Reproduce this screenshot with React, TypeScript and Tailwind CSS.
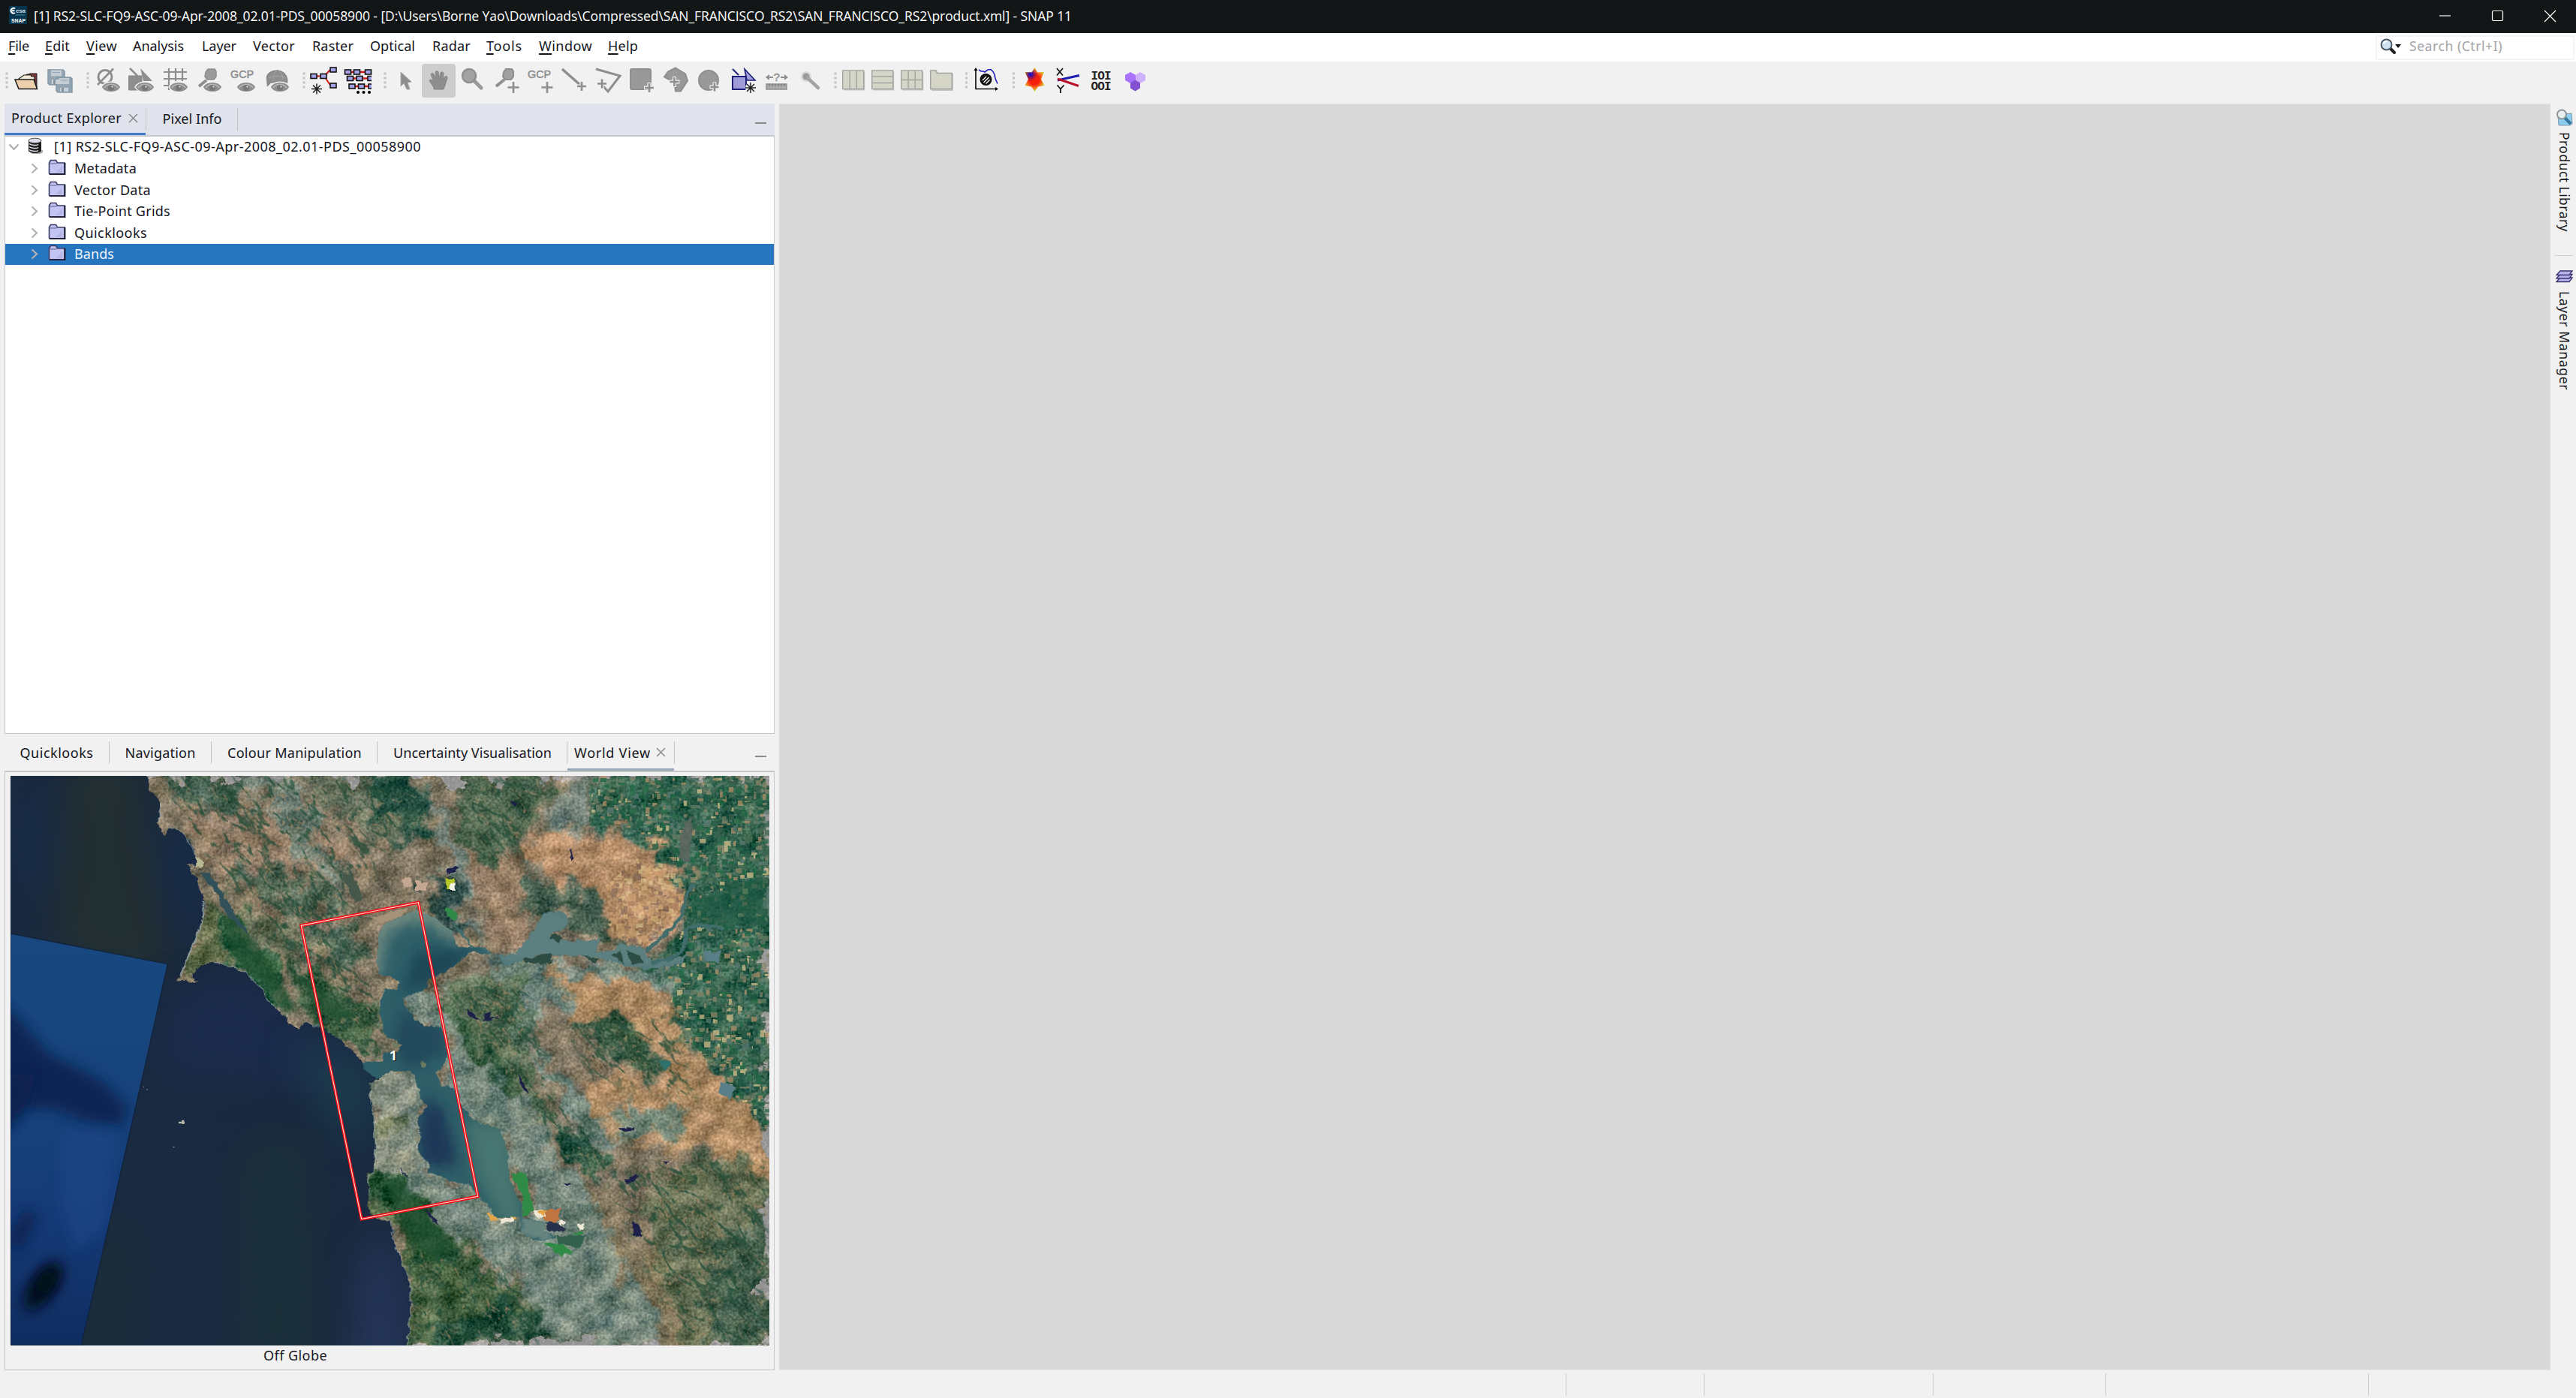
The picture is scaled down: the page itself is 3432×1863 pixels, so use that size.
import { useLayoutEffect, useRef, useState, type ReactNode } from "react";

const UI = "font-['Noto_Sans','Open_Sans',sans-serif]";

/* Text that is tracked so that it fills exactly `w` pixels along its direction. */
function Fit({ w, children, vertical = false, className = "" }: { w: number; children: string; vertical?: boolean; className?: string }) {
  const ref = useRef<HTMLSpanElement>(null);
  const [track, setTrack] = useState(0);
  useLayoutEffect(() => {
    const box = ref.current!.getBoundingClientRect();
    const natural = vertical ? box.height : box.width;
    setTrack((w - natural) / children.length);
  }, []);
  return (
    <span ref={ref} className={`inline-block shrink-0 whitespace-pre ${className}`} style={{ letterSpacing: track }}>
      {children}
    </span>
  );
}

function TitleBar() {
  return (
    <header className="flex h-11 shrink-0 items-center bg-[#121617] text-white">
      <svg className="-mt-[4px] ml-3 shrink-0" width="24" height="24" viewBox="0 0 24 24">
        <rect width="24" height="24" fill="#06364f" />
        <path d="M8 3.5A3.4 3.4 0 1 0 8 9M4 6.2h3.5" fill="none" stroke="#fff" strokeWidth="2" />
        <text x="9" y="9" fontSize="8" fontWeight="bold" fill="#c8dbe4" fontFamily="Liberation Sans" textLength="13">esa</text>
        <path d="M9 12h12" stroke="#4f8793" strokeWidth="2" opacity=".5" />
        <text x="3" y="22" fontSize="8" fontWeight="bold" fill="#fff" fontFamily="Liberation Sans" textLength="19" lengthAdjust="spacingAndGlyphs">SNAP</text>
      </svg>
      <div className="-mt-[3px] ml-[9px] font-['Open_Sans',sans-serif] text-[17.5px]">
        <Fit w={1383}>{"[1] RS2-SLC-FQ9-ASC-09-Apr-2008_02.01-PDS_00058900 - [D:\\Users\\Borne Yao\\Downloads\\Compressed\\SAN_FRANCISCO_RS2\\SAN_FRANCISCO_RS2\\product.xml] - SNAP 11"}</Fit>
      </div>
      <div className="-mt-[2px] ml-auto mr-[26px] flex items-center gap-[53px]">
        <svg width="17" height="17" viewBox="0 0 17 17"><path d="M1 8h15" stroke="#fff" strokeWidth="1.2" /></svg>
        <svg width="17" height="17" viewBox="0 0 17 17"><rect x="1.5" y="1.5" width="14" height="13" rx="1.5" fill="none" stroke="#fff" strokeWidth="1.2" /></svg>
        <svg width="17" height="17" viewBox="0 0 17 17"><path d="M1 1l15 15M16 1L1 16" stroke="#fff" strokeWidth="1.2" /></svg>
      </div>
    </header>
  );
}

/* label, text width, distance to the next item, has a mnemonic underline */
const MENUS: [string, number, number, boolean][] = [
  ["File", 28, 21, true], ["Edit", 33, 22, true], ["View", 41, 21, true], ["Analysis", 68, 24, false],
  ["Layer", 46, 22, false], ["Vector", 56, 23, false], ["Raster", 55, 22, false], ["Optical", 60, 23, false],
  ["Radar", 51, 21, false], ["Tools", 48, 22, true], ["Window", 71, 21, true], ["Help", 40, 0, true],
];

function MenuBar() {
  return (
    <nav className="flex h-[38px] shrink-0 items-center bg-white pl-[11px] text-[18px] text-[#16161e]">
      {MENUS.map(([label, w, gap, mn]) => (
        <div key={label} className="-mt-[5px] shrink-0" style={{ width: w + gap }}>
          <Fit w={w} className={mn ? "first-letter:underline first-letter:decoration-[1.5px] first-letter:underline-offset-[3px]" : ""}>{label}</Fit>
        </div>
      ))}
      <div className="ml-auto mr-[2px] flex h-[33px] w-[265px] items-center border-2 border-[#f4f4f4] bg-white">
        <svg className="-mt-[2px] ml-[3px] shrink-0" width="30" height="24" viewBox="0 0 30 24">
          <path d="M14 14l6 6" stroke="#222" strokeWidth="4" strokeLinecap="round" />
          <circle cx="9.5" cy="9.5" r="7" fill="#cfe3f3" stroke="#4d5a66" strokeWidth="2" />
          <path d="M5.5 8a5 5 0 0 1 5-3" stroke="#fff" strokeWidth="2" fill="none" />
          <path d="M21 9h8l-4 5z" fill="#111" />
        </svg>
        <div className="-mt-[5px] ml-[10px] text-[17.5px] text-[#a3a3a8]"><Fit w={124}>Search (Ctrl+I)</Fit></div>
      </div>
    </nav>
  );
}

const G = "#8e8e8e";

/* A toolbar slot that spans x0..x1; its drawing uses toolbar coordinates. */
function Slot({ x0, x1, children }: { x0: number; x1: number; children?: ReactNode }) {
  return (
    <svg className="block shrink-0" width={x1 - x0} height="56" viewBox={`${x0} 82 ${x1 - x0} 56`}>{children}</svg>
  );
}

const Eye = ({ x, y }: { x: number; y: number }) => (
  <g transform={`translate(${x} ${y})`}>
    <path d="M-13 0C-8-9 8-9 13 0C8 9-8 9-13 0Z" fill={G} stroke="#f1f1f1" strokeWidth="1.5" />
    <path d="M-9 1C-5-5 5-5 9 1" fill="none" stroke="#b9b9b9" strokeWidth="1.6" />
    <circle r="4" cy="1" fill="#777" /><circle r="1.2" cx="1.5" cy="-.5" fill="#ccc" />
  </g>
);
const Plus = ({ x, y, s = 6.5, halo = false }: { x: number; y: number; s?: number; halo?: boolean }) => (
  <g>
    {halo && <path d={`M${x - s - 1} ${y}h${2 * s + 2}M${x} ${y - s - 1}v${2 * s + 2}`} stroke="#f1f1f1" strokeWidth="5" />}
    <path d={`M${x - s} ${y}h${2 * s}M${x} ${y - s}v${2 * s}`} stroke={G} strokeWidth="2.6" />
  </g>
);
const Burst = ({ x, y }: { x: number; y: number }) => (
  <path transform={`translate(${x} ${y})`} d="M0-7V7M-7 0H7M-5-5L5 5M5-5L-5 5" stroke="#222" strokeWidth="1.5" />
);
const Grip = ({ x }: { x: number }) => (
  <g fill="#c2c2c2">{[98, 104, 110, 116].map((y) => <rect key={y} x={x - 1.5} y={y - 1.5} width="3" height="3" />)}</g>
);
const Node = ({ x, y }: { x: number; y: number }) => <rect x={x - 4} y={y - 3} width="8" height="6" fill="#a3a3e8" stroke="#111" strokeWidth="1.6" />;
const Gcp = ({ x }: { x: number }) => (
  <text x={x} y="103.5" fontSize="14" fill={G} stroke={G} strokeWidth=".5" fontFamily="Liberation Sans" textLength="31" lengthAdjust="spacingAndGlyphs">GCP</text>
);
const Tile = ({ x, d }: { x: number; d: string }) => (
  <g>
    <rect x={x + 1.5} y="95.5" width="28" height="25" fill="#c4c4c4" />
    <rect x={x} y="94" width="28" height="24.5" fill="#d5d5c8" stroke="#a3a3a0" strokeWidth="1.4" />
    <path transform={`translate(${x} 94)`} d={d} stroke="#a3a3a0" strokeWidth="1.4" />
  </g>
);

function ToolBar() {
  return (
    <div className="flex h-[56px] shrink-0 bg-[#f1f1f1]">
      <Slot x0={0} x1={15}><Grip x={9} /></Slot>
      <Slot x0={15} x1={56}>
        <path d="M28 104l8-5h2l2-1h9v20l-2 1" fill="#7d3438" stroke="#222" />
        <path d="M25 105l7-5h9l1 2h4v14H26z" fill="#f3ead8" stroke="#222" strokeWidth="1.2" />
        <path d="M20 106h25l4.5 12.5H25z" fill="#ecd0ae" stroke="#1b1b1b" strokeWidth="1.5" />
      </Slot>
      <Slot x0={56} x1={106}>
        <g fill="#93a5b3" stroke="#8496a4" strokeWidth="1.5">
          <path d="M64 93h20l2 2v18H66l-2-2z" /><path d="M75 103h19l2 2v18H77l-2-2z" />
        </g>
        <path d="M68 93.500h14v8H68zM79 104h13v8H79z" fill="#c3ccd3" /><path d="M69 106h11v6H69zM80 117h11v5H80z" fill="#c9d1d6" />
        <path d="M71 106h3v6h-3zM82 117h3v5h-3z" fill="#8496a4" /><path d="M70 96.500h10M81 107h9" stroke="#93a5b3" />
      </Slot>
      <Slot x0={106} x1={125}><Grip x={117} /></Slot>
      <Slot x0={125} x1={166}>
        <circle cx="140" cy="102.500" r="9" fill="none" stroke={G} strokeWidth="3" /><path d="M130 113L151 91.500" stroke={G} strokeWidth="2.600" />
        <Eye x={148} y={116} />
      </Slot>
      <Slot x0={166} x1={212}>
        <path d="M173 91l10 10" stroke={G} strokeWidth="2.500" /><path d="M187 91l16 17h-12z" fill={G} /><path d="M171.500 101H189v19h-17.500z" fill={G} stroke="#858585" />
        <Eye x={193} y={116} />
      </Slot>
      <Slot x0={212} x1={257}>
        <path d="M218 96h31M218 105h31M218 114h14M225 91v29M234 91v17M243 91v17" stroke={G} strokeWidth="2.200" /><Eye x={238} y={116} />
      </Slot>
      <Slot x0={257} x1={302}>
        <path d="M265 115l10-8" stroke={G} strokeWidth="4" /><path d="M277 92h9l2 3v7l-3 4h-9l-3-4 1-6z" fill="#9a9a9a" stroke={G} strokeWidth="1.500" /><Eye x={283} y={116} />
      </Slot>
      <Slot x0={302} x1={348}><Gcp x={307} /><Eye x={328} y={116} /></Slot>
      <Slot x0={348} x1={394}>
        <path d="M355.500 103c1-6 8-9 14-9 5 0 11 3 13 11v5h-22l-4 4z" fill={G} stroke="#858585" strokeWidth="1.500" />
        <path d="M358 104c6-3 14-3 22-1M368 94c-3 3-4 9-4 15M372 94c3 4 5 8 5 12" stroke="#a5a5a5" fill="none" /><Eye x={373} y={116} />
      </Slot>
      <Slot x0={394} x1={411}><Grip x={405} /></Slot>
      <Slot x0={411} x1={454}>
        <path d="M418 101.500h14L440 93M432 101.500l8 12" stroke="#d21c1c" strokeWidth="2" fill="none" />
        <Node x={418} y={101.500} /><Node x={431} y={101.500} /><Node x={444} y={93} /><Node x={444} y={114} /><Burst x={422} y={118.500} />
      </Slot>
      <Slot x0={454} x1={503}>
        <path d="M462 96h32M465 104.500h30M468 115h27" stroke="#d21c1c" strokeWidth="2.500" />
        <Node x={463.500} y={96} /><Node x={475.500} y={96} /><Node x={490.500} y={96} /><Node x={466.500} y={104.500} /><Node x={479} y={104.500} />
        <path d="M495 101.500h-5v6h5M495 112h-4v6h4" fill="#a3a3e8" stroke="#111" strokeWidth="1.600" /><Node x={469} y={115} /><Node x={481.500} y={115} />
        <circle cx="477" cy="123" r="2" /><circle cx="484.500" cy="123" r="2" /><circle cx="492" cy="123" r="2" />
      </Slot>
      <Slot x0={503} x1={524}><Grip x={513} /></Slot>
      <Slot x0={524} x1={562}><path d="M534 96v19l4-4 4 8h4l-3-9 5-1z" fill={G} stroke="#a8a8a8" /></Slot>
      <div className="mt-[2.500px] flex h-[45px] w-[45px] shrink-0 rounded bg-[#cdcdcd]">
        <svg width="45" height="47" viewBox="0 0 45 47">
          <path d="M16 34c0-5-5-8-6-12 2-2 4 0 6 2l-4-10c1-2 3-2 4 0l3 6-1-9c1-2 3-2 4 0l1 9 2-8c1-2 4-1 4 1l-1 9 3-5c2-1 3 0 3 2-2 6-3 10-5 15z" fill={G} stroke="#858585" />
        </svg>
      </div>
      <Slot x0={607} x1={652}>
        <path d="M632 115l9 9" stroke="#9a9a9a" strokeWidth="5" strokeLinecap="round" transform="translate(0 -7)" />
        <circle cx="625" cy="101" r="9" fill="#a3a3a3" stroke={G} strokeWidth="2.500" />
      </Slot>
      <Slot x0={652} x1={699}>
        <path d="M661 115l11-9" stroke={G} strokeWidth="4" /><path d="M674 92h8l2 3v7l-3 4h-8l-3-4 1-6z" fill="#a0a0a0" stroke={G} strokeWidth="2" /><Plus x={684} y={116.500} s={7.500} />
      </Slot>
      <Slot x0={699} x1={742}><Gcp x={703} /><Plus x={729} y={116.500} s={7.500} /></Slot>
      <Slot x0={742} x1={788}><path d="M749 92l26 23" stroke={G} strokeWidth="3.500" /><Plus x={775} y={115} s={6} halo /></Slot>
      <Slot x0={788} x1={833}><path d="M794 92l32 9-16 21-7-8" fill="none" stroke={G} strokeWidth="3" /><Plus x={802} y={111.500} s={6} halo /></Slot>
      <Slot x0={833} x1={879}><rect x="840" y="92" width="27" height="27" rx="2" fill="#999" stroke={G} strokeWidth="2" /><Plus x={865} y={117} s={6} halo /></Slot>
      <Slot x0={879} x1={923}><path d="M900 90.500l13 8 3 9-9 14h-7l-1-9-3-4-11-6 5-7z" fill="#999" stroke={G} strokeWidth="2" /><Plus x={898.500} y={109} s={6} halo /></Slot>
      <Slot x0={923} x1={968}><circle cx="944" cy="107" r="13" fill="#999" stroke={G} strokeWidth="2" /><Plus x={952} y={116} s={5.500} halo /></Slot>
      <Slot x0={968} x1={1014}>
        <path d="M976 92l8 8" stroke="#1d1d7a" strokeWidth="2" /><path d="M992 92l14 15h-11z" fill="#a3a0dc" stroke="#1d1d7a" strokeWidth="1.600" />
        <rect x="976" y="102" width="18" height="17" fill="#a09cd8" stroke="#1d1d7a" strokeWidth="2" /><circle cx="1000" cy="117" r="7" fill="#f1f1f1" /><Burst x={1000} y={117} />
      </Slot>
      <Slot x0={1014} x1={1056}>
        <path d="M1022 103h8M1040 103h8" stroke={G} strokeWidth="1.800" /><path d="M1020 103l5-4v8zM1050 103l-5-4v8z" fill={G} />
        <text x="1030.500" y="108" fontSize="15" fill={G} stroke={G} strokeWidth=".4" fontFamily="Liberation Sans">?</text>
        <rect x="1021" y="112" width="27" height="7" fill="#aaa" stroke={G} strokeWidth="1.500" /><path d="M1025 112v3M1029 112v3M1033 112v3M1037 112v3M1041 112v3M1045 112v3" stroke="#6f6f6f" />
      </Slot>
      <Slot x0={1056} x1={1102}>
        <circle cx="1074" cy="102" r="7" fill="#bbb" opacity=".45" /><circle cx="1074" cy="102" r="4.500" fill="#9a9a9a" /><path d="M1076 104l14 13" stroke="#a3a3a3" strokeWidth="4.500" strokeLinecap="round" />
      </Slot>
      <Slot x0={1102} x1={1120}><Grip x={1113} /></Slot>
      <Slot x0={1120} x1={1158}><Tile x={1122.700} d="M9.500 0V24.500M18.500 0V24.500" /></Slot>
      <Slot x0={1158} x1={1197}><Tile x={1161.700} d="M0 8H28M0 16.500H28" /></Slot>
      <Slot x0={1197} x1={1236}><Tile x={1200.700} d="M9.500 0V24.500M18.500 0V24.500M0 12.500H28" /></Slot>
      <Slot x0={1236} x1={1276}>
        <path d="M1241 96h8l2 2h19v23h-29z" fill="#c4c4c4" /><path d="M1239.700 94h7.500l1 3.500h20v21h-28.500z" fill="#d5d5c8" stroke="#a3a3a0" strokeWidth="1.400" />
      </Slot>
      <Slot x0={1276} x1={1295}><Grip x={1287.500} /></Slot>
      <Slot x0={1295} x1={1338}>
        <path d="M1300 92v26.500h28" fill="none" stroke="#111" strokeWidth="1.700" /><path d="M1300 90l-2.500 4h5zM1330 118.500l-4-2.500v5z" />
        <path d="M1304 93l3 2h3l2 1 4-3 4-.5 3 3 2 4 1 5 3 7" fill="none" stroke="#2020b8" strokeWidth="1.600" /><circle cx="1313.500" cy="106" r="8" fill="#111" />
        <path d="M1309 107l5-5M1310.500 110l7-7M1313.500 111.500l5-5" stroke="#fff" strokeWidth="1.300" />
      </Slot>
      <Slot x0={1338} x1={1360}><Grip x={1350.500} /></Slot>
      <Slot x0={1360} x1={1400}>
        <defs>
          <radialGradient id="starRed" cx="1378" cy="106" r="15" gradientUnits="userSpaceOnUse"><stop offset=".45" stopColor="#f4200c" /><stop offset=".75" stopColor="#f77b1d" /><stop offset="1" stopColor="#c9cf2a" /></radialGradient>
          <radialGradient id="starBlue" cx="1373" cy="99" r="10" gradientUnits="userSpaceOnUse"><stop offset=".2" stopColor="#2b13b0" /><stop offset="1" stopColor="#b3112a" stopOpacity="0" /></radialGradient>
        </defs>
        {["url(#starRed)", "url(#starBlue)"].map((f) => <path key={f} d="M1378.500 90l3.500 6.500 9-.5-4 9.500 4.500 8.500-8.500 1.500-4.500 6.500-4.500-6.500-8.500-1.500 4.500-8.500-4.500-9.500 9 .5z" fill={f} />)}
      </Slot>
      <Slot x0={1400} x1={1446}>
        <path d="M1408 91l8 9.500M1416 91l-8 9.500M1408.500 113.500l4.500 5 4.500-5M1413 118v6" stroke="#111" strokeWidth="1.800" fill="none" />
        <path d="M1409 107l29-6.500" stroke="#1c1cb0" strokeWidth="3" /><path d="M1409 105l28 9.500" stroke="#b8132c" strokeWidth="3" />
      </Slot>
      <Slot x0={1446} x1={1488}>
        <g fill="#222" fontFamily="Liberation Mono" fontWeight="bold" fontSize="16">
          <text x="1453.500" y="105.500" textLength="27">IOI</text><text x="1453.500" y="119.500" textLength="27">OOI</text>
        </g>
      </Slot>
      <Slot x0={1488} x1={1540}>
        <path d="M1506 96l7 4v7l-7 4-7-4v-7z" fill="#a872fa" /><path d="M1519 96l7 4v7l-7 4-6-4v-7z" fill="#ceb0fd" /><path d="M1512.500 106.500l6.500 4v7l-6.500 4-6.500-4v-7z" fill="#8250d0" />
      </Slot>
    </div>
  );
}

const CloseX = ({ color }: { color: string }) => (
  <svg width="13" height="13" viewBox="0 0 13 13" className="shrink-0"><path d="M1 1l11 11M12 1L1 12" stroke={color} strokeWidth="1.500" /></svg>
);
const Minimize = () => <div className="ml-auto mr-[11px] mt-[10px] h-[2px] w-[15px] self-center bg-[#8b8b8b]" />;
const Rule = () => <div className="h-[30px] w-px shrink-0 bg-[#c6c6c6]" />;

const CHILDREN: [string, number][] = [["Metadata", 83], ["Vector Data", 102], ["Tie-Point Grids", 128], ["Quicklooks", 97], ["Bands", 53]];

function Explorer() {
  return (
    <section className="flex h-[840px] shrink-0 flex-col text-[18px] text-[#16161e]">
      <div className="flex h-[42px] shrink-0 items-center bg-[#e0e3eb]">
        <div className="flex h-[43px] w-[187.500px] items-center border-b-4 border-[#3f7fca] pl-[9px]">
          <Fit w={147}>Product Explorer</Fit>
          <div className="ml-[9px]"><CloseX color="#868a90" /></div>
        </div>
        <Rule />
        <div className="-mt-[2px] w-[121px] pl-[22px]"><Fit w={79}>Pixel Info</Fit></div>
        <Rule />
        <Minimize />
      </div>
      <div className="flex min-h-0 grow flex-col border border-t-2 border-[#c4c6ca] bg-white">
        <div className="flex h-[28.500px] items-center">
          <svg className="ml-[4px]" width="15" height="12" viewBox="0 0 15 12"><path d="M1.500 2.500l6 6.500 6-6.500" fill="none" stroke="#adadad" strokeWidth="2.200" /></svg>
          <svg className="-mt-[3px] ml-[10px]" width="24" height="24" viewBox="0 0 24 24">
            <path d="M4 20l17-3v3l-3 2H7z" fill="#aaa" />
            <path d="M2 4v14c2 4 15 4 17 0V4z" fill="#1c1c1c" /><ellipse cx="10.500" cy="4.500" rx="8.500" ry="3.300" fill="#dcdcea" stroke="#444" />
            <path d="M3 8.500c3 2.500 10 2.500 12 1M3 12.500c3 2.500 10 2.500 12 1M3 16.500c3 2.500 10 2.500 12 1" stroke="#e8e8f4" strokeWidth="1.500" fill="none" />
          </svg>
          <div className="-mt-[2px] ml-[12px]"><Fit w={489}>[1] RS2-SLC-FQ9-ASC-09-Apr-2008_02.01-PDS_00058900</Fit></div>
        </div>
        {CHILDREN.map(([label, w]) => (
          <div key={label} className={`flex h-[28.500px] items-center ${label === "Bands" ? "bg-[#2675bf] text-[#eef4fb]" : ""}`}>
            <svg className="ml-[34px]" width="10" height="15" viewBox="0 0 10 15"><path d="M1.500 1.500l6.500 6-6.500 6" fill="none" stroke="#b2b2b2" strokeWidth="2.200" /></svg>
            <svg className="-mt-[3px] ml-[13px]" width="24" height="22" viewBox="0 0 24 22">
              <path d="M1.500 19V5l2-3.500h7L12.500 5H22v15H2z" fill="#c4c4f2" stroke="#3c3c66" strokeWidth="1.600" />
              <path d="M2.500 6h8l1.500-1" stroke="#7f7fae" fill="none" strokeWidth="1.500" /><path d="M2 20.200h20.500V5" stroke="#181830" strokeWidth="1.800" fill="none" /><path d="M10 18l9-9v9z" fill="#b6b6e6" />
            </svg>
            <div className="-mt-[1px] ml-[11px]"><Fit w={w}>{label}</Fit></div>
          </div>
        ))}
      </div>
    </section>
  );
}

/* ---------- World map ---------- */

function makeRng(seed: number) {
  let s = seed;
  return () => ((s = (s * 1664525 + 1013904223) % 4294967296) / 4294967296);
}
const FIELD_COLORS = ["#1d5c41", "#1f6a45", "#2b7048", "#2a5b45", "#4b6d55", "#1d5543", "#6a7d64", "#d0bd88", "#b08f68", "#3c6350", "#5c7a72", "#8a8668"];
const PALE_COLORS = ["#c99a69", "#d8b678", "#a97d5e", "#caa070", "#7d6458", "#e0c892"];
const fieldRng = makeRng(11);
const FIELDS = Array.from({ length: 2600 }, () => ({
  x: Math.round((2280 + fieldRng() * 740) / 9) * 9, y: Math.round((fieldRng() * 1420) / 9) * 9,
  w: 7 + fieldRng() * 20, h: 6 + fieldRng() * 18, c: FIELD_COLORS[Math.floor(fieldRng() * FIELD_COLORS.length)],
}));
const PALES = Array.from({ length: 300 }, () => ({
  x: Math.round((2380 + fieldRng() * 330) / 10) * 10, y: Math.round((330 + fieldRng() * 350) / 10) * 10,
  w: 8 + fieldRng() * 24, h: 8 + fieldRng() * 18, c: PALE_COLORS[Math.floor(fieldRng() * PALE_COLORS.length)],
}));
const CITY_COLORS = ["#aab3aa", "#c3c5bb", "#5f7d6c", "#8ea39c", "#a58f78", "#6c8687"];
const CITY = Array.from({ length: 2200 }, () => ({
  x: 1420 + fieldRng() * 1350, y: 700 + fieldRng() * 1577, s: 3 + fieldRng() * 6, c: CITY_COLORS[Math.floor(fieldRng() * CITY_COLORS.length)],
}));

const OCEAN = "M-20-20H535L552 25 560 60 588 95 598 130 596 180 584 190 600 210 612 238 630 212 660 208 690 230 720 270 745 320 745 362 708 348 730 390 752 430 752 460 770 475 775 520 768 570 750 630 715 710 680 800 660 815 690 822 750 825 728 810 728 785 755 760 790 748 850 752 910 770 950 795 1000 845 1025 895 1060 930 1100 960 1110 990 1150 1010 1180 988 1235 1000 1300 1045 1340 1075 1380 1110 1410 1150 1500 1150 1490 1185 1470 1215 1433 1230 1440 1300 1455 1400 1460 1500 1455 1580 1425 1590 1435 1680 1425 1710 1440 1750 1460 1770 1518 1780 1530 1820 1540 1890 1575 1970 1598 2030 1600 2100 1595 2200 1580 2300H-20Z";
const BAY = "M1400 1150L1485 1145 1490 1110 1545 1100 1570 1080 1500 1040 1475 950 1475 905 1500 850 1540 850 1555 820 1475 790 1462 740 1480 600 1530 575 1590 545 1620 535 1700 570 1760 620 1790 680 1840 685 1900 690 1930 715 1980 720 2020 718 2030 690 2060 660 2110 590 2130 545 2210 545 2232 580 2200 620 2150 630 2180 650 2250 662 2350 650 2340 705 2400 700 2440 670 2480 680 2530 690 2560 740 2650 735 2700 710 2680 750 2600 765 2540 772 2480 762 2400 735 2230 712 2110 715 2030 745 1980 755 1940 712 1830 705 1780 755 1710 800 1670 805 1665 850 1620 870 1570 890 1590 940 1620 975 1660 1000 1725 1010 1745 1100 1745 1145 1700 1185 1720 1235 1780 1260 1800 1310 1850 1380 1950 1410 1970 1450 1985 1500 1995 1600 2010 1650 2045 1720 2050 1768 2130 1785 2140 1825 2180 1838 2150 1852 2100 1858 2045 1825 2035 1760 1990 1770 1945 1765 1900 1705 1865 1680 1830 1630 1770 1625 1720 1600 1665 1582 1678 1560 1625 1490 1640 1450 1625 1370 1668 1320 1640 1290 1625 1230 1618 1190 1590 1175 1520 1180 1460 1215Z";
const FARMS = "M2330 0H3033V1420L2980 1390 2960 1310 2900 1300 2860 1200 2790 1150 2740 1080 2680 1060 2690 980 2640 900 2660 830 2560 780 2560 730 2660 700 2700 560 2720 450 2640 330 2560 300 2510 230 2400 190 2310 200Z";
const DRY = "M2040 260L2200 220 2500 230 2620 340 2700 440 2680 560 2600 640 2540 690 2420 660 2370 580 2330 480 2370 430 2180 440 2160 380 2050 340Z";
const URBAN = "M1660 850L1730 860 1740 960 1850 1120 1980 1250 2110 1370 2170 1560 2300 1640 2370 1800 2480 2010 2620 2277H2150L2060 2050 1950 1980 1800 1860 1720 1790 1620 1680 1530 1570 1440 1500 1430 1210 1500 1170 1620 1170 1660 1300 1640 1540 1860 1640 1960 1740 2100 1700 1970 1480 1860 1380 1700 1240 1700 1150 1750 1100 1680 1010 1580 960 1560 880Z";
const GREENS: [string, string, number][] = [
  ["M610 0H980L960 90 880 150 700 110 640 70Z", "#2c5848", 0.7],
  ["M860 380L1100 370 1350 440 1340 540 1150 560 1060 500 900 450Z", "#355f4c", 0.6],
  ["M870 560L1150 560 1180 740 1100 760 980 640Z", "#5c6c51", 0.7],
  ["M1150 0H1500L1560 250 1440 260 1330 160 1180 60Z", "#4a6a55", 0.5],
  ["M1440 0H1600L1690 130 1640 260 1560 230 1460 110Z", "#1f5042", 0.85],
  ["M1780 0H2130L2160 100 2040 240 1960 330 1850 330 1800 230Z", "#3d6048", 0.8],
  ["M830 530L900 570 1000 680 1060 790 1150 960 1060 925 1000 840 900 760 830 620Z", "#235538", 1],
  ["M760 480L850 560 880 760 720 800 690 790 750 640Z", "#5d6c48", 0.9],
  ["M1110 740L1230 760 1380 900 1480 1000 1480 1140 1380 1110 1240 1000 1140 900Z", "#31593d", 0.9],
  ["M1170 590L1400 620 1440 760 1300 760 1190 700Z", "#305a48", 0.7],
  ["M1730 860L1850 790 2020 800 2060 900 2050 1100 2130 1260 2160 1400 2060 1350 1960 1240 1850 1100Z", "#4c6a50", 0.85],
  ["M1720 890L1790 930 1900 1080 2050 1290 2070 1350 1960 1230 1800 1060Z", "#2a5439", 0.9],
  ["M2150 1390L2290 1400 2400 1560 2370 1620 2210 1530Z", "#245340", 0.9],
  ["M2040 440L2160 370 2200 440 2330 450 2360 380 2350 540 2400 650 2280 660 2240 560 2120 540 2060 600Z", "#455f50", 0.95],
  ["M1670 400L1800 400 1810 540 1850 680 1760 620 1680 560Z", "#2b4a47", 0.95],
  ["M1430 1600L1540 1500 1700 1700 1850 1960 2070 2080 2180 2277H1580L1600 2050 1560 1900 1520 1780 1440 1740Z", "#44603f", 1],
  ["M1440 1610L1530 1560 1640 1700 1760 1860 1850 1960 1720 2000 1600 1850 1520 1750Z", "#245031", 1],
  ["M1700 2190L2090 2090 2150 2277H1640Z", "#234f3c", 0.9],
  ["M2520 1620L2700 1540 2900 1500 3033 1570V2277H2700L2560 1980Z", "#5a6c4e", 0.7],
  ["M2780 1950L3033 1700V2277H2820Z", "#3a5a49", 0.8],
];

/* Where hill ridges are drawn over the base terrain. */
const HILLS = "M600 0H1500L1700 150 1500 300 1300 600 1500 900 1500 1140 1250 1000 1150 800 860 420 700 200ZM1780 0H2160L2000 350 1850 350ZM1740 830L2050 790 2180 1250 2350 1450 2420 1650 2200 1560ZM2250 960L2620 960 2760 1300 2300 1200ZM2380 1620L2700 1500 3033 1550V2277H2700ZM1560 1850L1850 1850 2080 2080 2130 2277H1600Z";

function WorldMap() {
  return (
    <svg className="block h-[759px] w-[1011px]" viewBox="0 0 3033 2277" preserveAspectRatio="none">
      <defs>
        <filter id="terrain" x="0" y="0" width="3033" height="2277" filterUnits="userSpaceOnUse" colorInterpolationFilters="sRGB">
          <feTurbulence type="fractalNoise" baseFrequency=".01" numOctaves="5" seed="4" result="n" />
          <feGaussianBlur in="SourceGraphic" stdDeviation="12" result="b" />
          <feDisplacementMap in="b" in2="n" scale="210" xChannelSelector="R" yChannelSelector="G" result="d" />
          <feTurbulence type="fractalNoise" baseFrequency=".011 .014" numOctaves="6" seed="9" result="g" />
          <feColorMatrix in="g" values="1.200 .2 0 0 -.2  1 .1 0 0 -.05  .9 0 .1 0 0  0 0 0 0 1" result="gc" />
          <feComposite in="d" in2="gc" operator="arithmetic" k2="1" k3=".42" k4="-.21" result="t" />
          <feTurbulence type="fractalNoise" baseFrequency=".09" numOctaves="3" seed="14" result="f" />
          <feColorMatrix in="f" values="1 0 0 0 0  .9 .1 0 0 0  .9 0 .1 0 0  0 0 0 0 1" result="fc" />
          <feComposite in="t" in2="fc" operator="arithmetic" k2="1" k3=".36" k4="-.18" />
        </filter>
        <filter id="ridges" x="-2500" y="-2500" width="6500" height="6500" filterUnits="userSpaceOnUse" colorInterpolationFilters="sRGB">
          <feTurbulence type="turbulence" baseFrequency=".007 .017" numOctaves="5" seed="21" />
          <feColorMatrix values="0 0 0 0 .13  0 0 0 0 .3  0 0 0 0 .22  -9 0 0 0 2" />
        </filter>
        <filter id="dryRidges" x="-2500" y="-2500" width="6500" height="6500" filterUnits="userSpaceOnUse" colorInterpolationFilters="sRGB">
          <feTurbulence type="turbulence" baseFrequency=".01 .026" numOctaves="5" seed="33" />
          <feColorMatrix values="0 0 0 0 .68  0 0 0 0 .54  0 0 0 0 .4  -10 0 0 0 1.600" />
        </filter>
        <filter id="shore" x="0" y="0" width="3033" height="2277" filterUnits="userSpaceOnUse" colorInterpolationFilters="sRGB">
          <feTurbulence type="fractalNoise" baseFrequency=".03" numOctaves="4" seed="2" />
          <feDisplacementMap in="SourceGraphic" scale="24" xChannelSelector="R" yChannelSelector="G" />
        </filter>
        <filter id="soft" x="-60%" y="-60%" width="220%" height="220%"><feGaussianBlur stdDeviation="26" /></filter>
        <filter id="haze" x="-2000" y="-2000" width="6000" height="6000" filterUnits="userSpaceOnUse" colorInterpolationFilters="sRGB"><feGaussianBlur stdDeviation="75" /></filter>
        <filter id="faint" x="-50%" y="-50%" width="200%" height="200%"><feGaussianBlur stdDeviation="7" /></filter>
        <linearGradient id="deep" x1="0" y1="0" x2="0" y2="1"><stop offset="0" stopColor="#184880" /><stop offset=".45" stopColor="#17427b" /><stop offset=".7" stopColor="#153a77" /><stop offset="1" stopColor="#0f2c5f" /></linearGradient>
        <mask id="hills" maskUnits="userSpaceOnUse" x="0" y="0" width="3033" height="2277"><path d={HILLS} fill="#fff" filter="url(#soft)" /></mask>
        <clipPath id="farms"><path d={FARMS} /></clipPath>
        <clipPath id="pale"><path d="M2380 440L2500 330 2660 360 2700 460 2640 600 2540 680 2420 650 2370 560Z" /></clipPath>
        <clipPath id="city"><path d={URBAN} /></clipPath>
        <clipPath id="deepClip"><path d="M0 630L628 752 542 1140 283 2277H0Z" /></clipPath>
        <clipPath id="oceanClip"><path d={OCEAN} /></clipPath>
        <clipPath id="bayClip"><path d={BAY} /></clipPath>
      </defs>

      <g filter="url(#terrain)">
        <rect x="-200" y="-200" width="3500" height="2700" fill="#817662" />
        <path d="M650 150L1150 180 1400 330 1300 420 900 380 780 320Z" fill="#917c66" />
        <path d="M950 0L1110 0 1240 180 1200 280 1340 380 1300 430 1180 330 1050 160Z" fill="#6f8074" />
        <path d="M1620 60L1760 180 1850 400 1820 560 1900 700 1810 650 1740 260Z" fill="#75847a" />
        <path d="M1820 330L2040 340 2050 640 1980 700 1880 560Z" fill="#927b63" />
        <path d="M2200 0L2320 0 2280 230 2180 360 2040 380 2140 250Z" fill="#76857b" />
        <path d="M1940 720L2200 720 2600 770 2720 820 2640 880 2300 860 2260 960 2120 940 2060 1060 2250 1220 2360 1350 2660 1340 2680 1430 2380 1500 2230 1350 2000 1000Z" fill="#70857b" />
        {GREENS.map(([d, c, o]) => <path key={d} d={d} fill={c} opacity={o} />)}
        <path d={DRY} fill="#b38c69" />
        <path d="M2150 750L2300 790 2600 860 2750 1040 2880 1180 3033 1480V1640L2850 1500 2680 1480 2450 1480 2330 1340 2320 1190 2640 1200 2440 1000 2260 960Z" fill="#ac8963" />
        <path d="M2260 1000L2400 950 2520 1030 2600 1190 2440 1140Z" fill="#3d5c45" />
        <path d="M2400 1320L2680 1340 2690 1430 2450 1470Z" fill="#718576" />
        <path d="M2160 1630L2330 1640 2420 1780 2600 2000 2700 2277H2600L2420 1950Z" fill="#86795d" />
        <path d={FARMS} fill="#356450" />
        <path d={URBAN} fill="#718479" />
        <path d="M1450 1190L1610 1180 1620 1330 1600 1560 1470 1600 1450 1400Z" fill="#8a9282" />
        <path d="M1450 1380L1580 1340 1560 1440 1470 1450Z" fill="#5f6e51" />
      </g>
      <g mask="url(#hills)">
        <g opacity=".75" transform="rotate(48 1500 1100)"><rect x="-1000" y="-1000" width="5000" height="5000" filter="url(#ridges)" /></g>
        <g opacity=".7" transform="rotate(48 1500 1100)"><rect x="-1000" y="-1000" width="5000" height="5000" filter="url(#dryRidges)" /></g>
      </g>
      <path d="M850 550L905 575 1000 690 1070 800 1140 940 1070 910 1005 830 910 750 860 650ZM1160 800L1240 850 1380 960 1300 980 1220 930ZM1500 1620L1560 1600 1660 1750 1780 1880 1690 1940 1590 1850Z" fill="#215233" opacity=".65" filter="url(#faint)" />
      <g clipPath="url(#farms)" opacity=".75">{FIELDS.map((f, i) => <rect key={i} x={f.x} y={f.y} width={f.w} height={f.h} fill={f.c} />)}</g>
      <g clipPath="url(#pale)" opacity=".6">{PALES.map((f, i) => <rect key={i} x={f.x} y={f.y} width={f.w} height={f.h} fill={f.c} />)}</g>
      <g clipPath="url(#city)" opacity=".4">{CITY.map((f, i) => <rect key={i} x={f.x} y={f.y} width={f.s} height={f.s} fill={f.c} />)}</g>
      <path d="M2690 190L2730 160 2710 350 2670 330Z" fill="#5d6560" opacity=".85" filter="url(#shore)" />
      <path d="M2720 500L2830 470 2900 420 3033 400V600L2900 590 2850 620 2720 570Z" fill="#165440" opacity=".6" filter="url(#faint)" />

      <g filter="url(#shore)">
        <path d={OCEAN} fill="#1a2a40" />
        <g clipPath="url(#oceanClip)">
          <path d="M250-100H480L600 300 640 800 200 760 150 300Z" fill="#25312f" opacity=".8" filter="url(#haze)" />
          <path d="M30 100L120 50 190 300 120 500 20 400Z" fill="#182d4e" opacity=".7" filter="url(#haze)" />
          <path d="M550 150L760 300 780 500 690 700 640 500Z" fill="#182d50" opacity=".7" filter="url(#haze)" />
          <path d="M650 860L960 800 1180 1030 1420 1180 1400 1300 900 1200 600 1200Z" fill="#1c2c52" opacity=".7" filter="url(#haze)" />
          <path d="M1130 1050L1440 1150 1440 1450 1330 1450 1190 1220Z" fill="#1f4350" opacity=".75" filter="url(#haze)" />
          <path d="M900 1500L1200 1400 1250 2400H900Z" fill="#1c3338" opacity=".65" filter="url(#haze)" />
          <path d="M350 1800H500L480 2400H250Z" fill="#1c2f36" opacity=".7" filter="url(#haze)" />
          <path d="M1420 1850L1540 1900 1620 2377H1350Z" fill="#293961" opacity=".8" filter="url(#haze)" />
        </g>
        <path d="M596 110V182M770 500L768 570 750 630 715 710 680 800" fill="none" stroke="#a9bbb5" strokeWidth="6" opacity=".7" />
        <path d="M800 748L850 752 910 770 950 795 1000 845 1025 895 1060 930M1180 988L1235 1000M1440 1240V1300L1455 1400 1460 1500 1455 1580 1430 1600 1435 1680M1518 1780L1540 1890 1575 1970 1598 2030 1600 2100 1595 2200 1585 2277M630 212L660 208 690 230 745 320V360" fill="none" stroke="#a9bbb5" strokeWidth="4" opacity=".5" />
        <path d="M742 322L775 350 765 365 742 362Z" fill="#b8b891" />
      </g>
      <path d="M0 630L628 752 542 1140 283 2277H0Z" fill="url(#deep)" stroke="#12233a" strokeWidth="4" />
      <g clipPath="url(#deepClip)">
        <path d="M-40 900L60 1000 150 1110 290 1180 380 1230 470 1330 440 1400 300 1380 170 1330 60 1330-60 1460Z" fill="#0a2150" opacity=".9" filter="url(#soft)" />
        <path d="M-60 1180L100 1200 60 1320-60 1420Z" fill="#0f2350" filter="url(#soft)" />
        <path d="M200 1420H420L380 1800 260 1900 200 1700Z" fill="#1a4584" opacity=".8" filter="url(#soft)" />
        <path d="M60 1730L110 1760 40 1900-20 1860Z" fill="#08204d" opacity=".9" filter="url(#soft)" />
        <ellipse cx="130" cy="2040" rx="50" ry="115" transform="rotate(35 130 2040)" fill="#020d1c" filter="url(#soft)" />
        <ellipse cx="142" cy="2025" rx="32" ry="55" transform="rotate(35 142 2025)" fill="#010b16" filter="url(#soft)" />
      </g>

      <g filter="url(#shore)">
        <path d={BAY} fill="#2f5f68" />
        <g clipPath="url(#bayClip)">
          <path d="M1440 500L1820 500 1800 680 1680 600 1600 580 1500 640 1480 800 1420 780Z" fill="#6f8a80" filter="url(#soft)" />
          <path d="M1620 700L1850 690 1760 800 1560 880Z" fill="#1d4657" filter="url(#soft)" />
          <path d="M1900 670L2100 500 2720 640V800L1950 770Z" fill="#5b7f80" filter="url(#soft)" />
          <path d="M1560 930L1730 1010 1740 1100 1600 1180 1520 1100Z" fill="#21485b" filter="url(#soft)" />
          <path d="M1660 1280L1730 1330 1790 1560 1640 1560 1630 1400Z" fill="#1b3858" filter="url(#soft)" />
          <path d="M1820 1380L2000 1400 2050 1850 1950 1760 1850 1560Z" fill="#47756f" filter="url(#soft)" />
          <path d="M2050 1760L2180 1800 2150 1860 2040 1830Z" fill="#66857f" filter="url(#faint)" />
        </g>
        <path d="M2540 700C2590 650 2680 600 2690 530S2720 450 2730 430M2560 745C2660 740 2700 700 2700 640S2800 600 2850 610" fill="none" stroke="#426d6d" strokeWidth="14" />
        <path d="M1770 590L1850 690" stroke="#426d6d" strokeWidth="9" />
        <path d="M755 380L800 395 840 450 900 560 960 640 930 620 870 560 820 470Z" fill="#31515a" />
        <path d="M1320 385L1370 400 1410 490 1380 510 1350 450Z" fill="#45584b" />
        <path d="M2770 700H2840L2830 745 2780 740ZM2840 1220L2890 1240 2880 1290 2830 1270Z" fill="#5b7f88" />
        <path d="M2050 730L2170 710 2160 750 2060 750ZM2160 630L2210 645 2190 662 2150 650ZM2460 695L2520 720 2530 755 2480 750ZM2400 720L2440 700 2450 745ZM2280 715L2360 735 2340 745Z" fill="#2d4c43" />
        <path d="M2240 290L2255 330 2245 340 2235 325ZM2000 100L2035 110 2010 122ZM1740 370L1790 365 1780 390 1740 392ZM1900 950L1920 940 1915 965 1950 960 1890 985ZM1820 930L1880 980 1830 960ZM2030 1190L2080 1280 2040 1240ZM2450 1620L2500 1590 2515 1600 2480 1620 2460 1635ZM2490 1780L2510 1790 2520 1850 2490 1840ZM1555 1560L1600 1620 1570 1590ZM1650 1720L1720 1795 1680 1770ZM2430 1405H2490V1415L2450 1420ZM2605 1540L2630 1545 2620 1560ZM2200 1625L2250 1630 2220 1640Z" fill="#1d2048" />
        <path d="M2590 1140H2640L2620 1180Z" fill="#2f716b" />
        <path d="M2000 1590L2060 1590 2090 1740 2050 1760 2040 1660ZM2130 1870L2200 1870 2250 1905 2200 1920ZM1735 525L1785 540 1780 580 1740 560ZM2240 1830L2290 1820 2280 1840Z" fill="#2f8a45" />
        <path d="M2180 1835L2300 1840 2270 1890 2190 1870Z" fill="#33604f" />
        <path d="M2120 1740L2200 1725 2190 1770 2175 1800 2130 1770Z" fill="#c0743f" />
        <path d="M2090 1740L2130 1735 2140 1760 2100 1765ZM2190 1770L2220 1780 2200 1800ZM2265 1790H2300L2270 1815ZM1960 1775L2020 1760 2010 1780 1960 1795Z" fill="#eee8d4" />
        <path d="M1905 1745L1920 1780H1950L1940 1760ZM2110 1740L2140 1738 2130 1760ZM2000 1760H2020V1775Z" fill="#e2a545" />
        <path d="M2140 1785L2180 1790 2220 1810 2200 1825 2145 1820Z" fill="#27304d" />
        <path d="M1735 410H1775L1770 450 1745 450Z" fill="#b6c829" /><path d="M1755 430H1778V455H1758Z" fill="#f3f4e4" />
        <path d="M1570 405L1600 410 1610 440 1570 445ZM1620 420L1670 420 1660 460 1620 455Z" fill="#c5a791" />
        <path d="M1440 570L1520 540 1590 530 1560 560 1480 590Z" fill="#a69279" />
        <path d="M1530 1066L1556 1070 1556 1086 1534 1084ZM1645 1142L1665 1150 1662 1165 1645 1160Z" fill="#6f7b60" />
      </g>
      <path d="M672 1382h24v8h-24zM684 1376h10v16h-8z" fill="#b9b7a9" /><path d="M530 1243h4M543 1252l6 5M648 1484h8" stroke="#8693a0" strokeWidth="3" />

      <path d="M1162 598L1630 506 1868 1681 1403 1772Z" fill="none" stroke="#f8090f" strokeWidth="12" />
      <path d="M1162 598L1630 506 1868 1681 1403 1772Z" fill="none" stroke="#ffd9d9" strokeWidth="3.500" />
      <g fontFamily="Noto Sans" fontWeight="bold" fontSize="54">
        <text x="1518" y="1141" fill="#111">1</text><text x="1514" y="1137" fill="#fff">1</text>
      </g>
    </svg>
  );
}

/* label, text width, cell layout */
const VIEWS: [string, number, string][] = [
  ["Quicklooks", 98, "w-[138.500px] pl-[20.500px]"], ["Navigation", 94, "w-[135.500px] pl-[21px]"],
  ["Colour Manipulation", 179, "w-[219.500px] pl-[21px]"], ["Uncertainty Visualisation", 211, "w-[252.500px] pl-[21.500px]"],
];

function WorldView() {
  return (
    <section className="flex grow flex-col text-[18px] text-[#16161e]">
      <div className="flex h-[49px] shrink-0 items-center">
        {VIEWS.map(([label, w, cls]) => (
          <div key={label} className="flex shrink-0 items-center">
            <div className={cls}><Fit w={w}>{label}</Fit></div><Rule />
          </div>
        ))}
        <div className="flex h-[50px] w-[142px] items-center border-b-4 border-[#9aa6b9] pl-[9px] pt-[4px]">
          <Fit w={102}>World View</Fit><div className="ml-[7px]"><CloseX color="#888" /></div>
        </div>
        <Rule />
        <Minimize />
      </div>
      <div className="flex grow flex-col border border-t-2 border-[#c6c6c6] px-[7px] pt-[5px]">
        <WorldMap />
        <div className="-mt-[6px] flex grow items-center pl-[337px]"><Fit w={85}>Off Globe</Fit></div>
      </div>
    </section>
  );
}

function SideBar() {
  return (
    <aside className="flex w-[34px] shrink-0 flex-col items-center pt-[7px] text-[17.500px] text-[#1b1b22]">
      <svg className="ml-[2px] shrink-0" width="23" height="24" viewBox="0 0 23 24">
        <path d="M3 10h6l2-3 10-1 1 14-3 2H4z" fill="#8fcdf0" stroke="#7f98a8" /><path d="M12 12l8 8" stroke="#35749c" strokeWidth="4" /><circle cx="8" cy="7.500" r="6" fill="#e9eeee" stroke="#8c9698" strokeWidth="2" />
      </svg>
      <div className="ml-[3px] mt-[7px] h-[133px] leading-[22px] [writing-mode:vertical-rl]"><Fit w={133} vertical>Product Library</Fit></div>
      <div className="mt-[31px] h-px w-[25px] shrink-0 bg-[#cfcfcf]" />
      <svg className="ml-[2px] mt-[19px] shrink-0" width="23" height="18" viewBox="0 0 23 18">
        {[10, 5.5, 1].map((y) => <path key={y} d={`M1 ${y + 5.5}L6 ${y}h16l-4 5.500zM1 ${y + 5.5}h17`} fill="#b9b4ec" stroke="#37336e" strokeWidth="1.300" />)}
      </svg>
      <div className="ml-[3px] mt-[10px] h-[132px] leading-[22px] [writing-mode:vertical-rl]"><Fit w={132} vertical>Layer Manager</Fit></div>
    </aside>
  );
}

function StatusBar() {
  return (
    <footer className="flex h-[37px] shrink-0 items-center justify-end bg-[#f1f1f1]">
      {["w-[184px]", "w-[305px]", "w-[230px]", "w-[350px]", "w-[277px]"].map((w) => (
        <div key={w} className={`h-[30px] shrink-0 border-l border-[#cdcdcd] ${w}`} />
      ))}
    </footer>
  );
}

export default function App() {
  return (
    <div className={`flex h-[1863px] w-[3432px] flex-col overflow-hidden bg-[#f1f1f1] leading-[24px] ${UI}`}>
      <TitleBar />
      <MenuBar />
      <ToolBar />
      <main className="flex min-h-0 grow">
        <div className="ml-[6px] flex w-[1026px] shrink-0 flex-col"><Explorer /><WorldView /></div>
        <div className="ml-[6px] grow border-y border-[#e4e4e4] bg-[#d9d9d9]" />
        <SideBar />
      </main>
      <StatusBar />
    </div>
  );
}
